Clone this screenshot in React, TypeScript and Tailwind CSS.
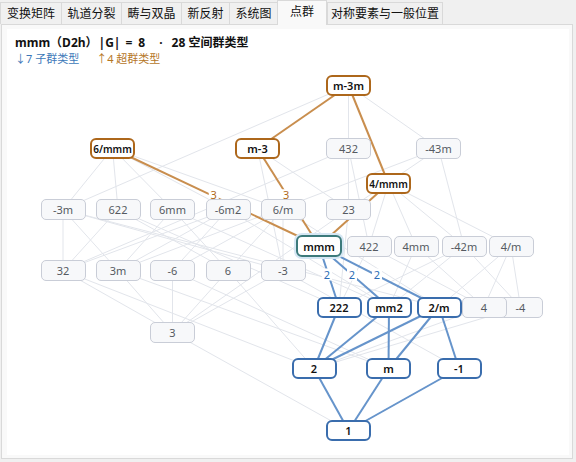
import React from "react";

type Kind = "base" | "sup" | "sub" | "sel";
type Node = { id: string; x: number; y: number; k: Kind; small?: boolean };

// origin of the white drawing area, in page coordinates
const OX = 7;
const OY = 29;
const W = 45;
const H = 21;

const nodes: Node[] = [
  { id: "m-3m", x: 326, y: 75, k: "sup" },
  { id: "6/mmm", x: 90, y: 138, k: "sup", small: true },
  { id: "m-3", x: 235, y: 138, k: "sup" },
  { id: "432", x: 326, y: 138, k: "base" },
  { id: "-43m", x: 416, y: 138, k: "base" },
  { id: "4/mmm", x: 366, y: 173, k: "sup", small: true },
  { id: "-3m", x: 40.5, y: 199, k: "base" },
  { id: "622", x: 95.5, y: 199, k: "base" },
  { id: "6mm", x: 150, y: 199, k: "base" },
  { id: "-6m2", x: 205.5, y: 199, k: "base" },
  { id: "6/m", x: 260.5, y: 199, k: "base" },
  { id: "23", x: 326, y: 199, k: "base" },
  { id: "422", x: 346.5, y: 235.5, k: "base" },
  { id: "4mm", x: 393.5, y: 235.5, k: "base" },
  { id: "-42m", x: 441.5, y: 235.5, k: "base" },
  { id: "4/m", x: 488.5, y: 235.5, k: "base" },
  { id: "32", x: 40.5, y: 260, k: "base" },
  { id: "3m", x: 95.5, y: 260, k: "base" },
  { id: "-6", x: 150, y: 260, k: "base" },
  { id: "6", x: 205.5, y: 260, k: "base" },
  { id: "-3", x: 260.5, y: 260, k: "base" },
  { id: "-4", x: 498, y: 296.5, k: "base" },
  { id: "4", x: 461.5, y: 296.5, k: "base" },
  { id: "222", x: 316.5, y: 296.5, k: "sub" },
  { id: "mm2", x: 366.5, y: 296.5, k: "sub" },
  { id: "2/m", x: 416.5, y: 296.5, k: "sub" },
  { id: "3", x: 150, y: 322, k: "base" },
  { id: "2", x: 291.5, y: 358, k: "sub" },
  { id: "m", x: 366, y: 358, k: "sub" },
  { id: "-1", x: 436.5, y: 358, k: "sub" },
  { id: "1", x: 326, y: 420, k: "sub" },
  { id: "mmm", x: 296, y: 235, k: "sel" },
];

const byId: Record<string, Node> = Object.fromEntries(nodes.map((n) => [n.id, n]));

function center(id: string) {
  const n = byId[id];
  const w = n.k === "sel" ? 46 : W;
  const h = n.k === "sel" ? 22 : H;
  return { cx: n.x + w / 2 - OX, cy: n.y + h / 2 - OY };
}

// maximal-subgroup relations between the 32 crystallographic point groups
const lattice: [string, string][] = [
  ["m-3m", "m-3"], ["m-3m", "432"], ["m-3m", "-43m"], ["m-3m", "4/mmm"], ["m-3m", "-3m"],
  ["m-3", "23"], ["m-3", "mmm"], ["m-3", "-3"],
  ["432", "23"], ["432", "422"], ["432", "32"],
  ["-43m", "23"], ["-43m", "-42m"], ["-43m", "3m"],
  ["23", "222"], ["23", "3"],
  ["6/mmm", "6/m"], ["6/mmm", "622"], ["6/mmm", "6mm"], ["6/mmm", "-6m2"], ["6/mmm", "-3m"], ["6/mmm", "mmm"],
  ["6/m", "6"], ["6/m", "-6"], ["6/m", "-3"], ["6/m", "2/m"],
  ["622", "6"], ["622", "32"], ["622", "222"],
  ["6mm", "6"], ["6mm", "3m"], ["6mm", "mm2"],
  ["-6m2", "-6"], ["-6m2", "32"], ["-6m2", "3m"], ["-6m2", "mm2"],
  ["6", "3"], ["6", "2"], ["-6", "3"], ["-6", "m"],
  ["-3m", "32"], ["-3m", "3m"], ["-3m", "-3"], ["-3m", "2/m"],
  ["32", "3"], ["32", "2"], ["3m", "3"], ["3m", "m"], ["-3", "3"], ["-3", "-1"], ["3", "1"],
  ["4/mmm", "4/m"], ["4/mmm", "422"], ["4/mmm", "4mm"], ["4/mmm", "-42m"], ["4/mmm", "mmm"],
  ["4/m", "4"], ["4/m", "-4"], ["4/m", "2/m"],
  ["422", "4"], ["422", "222"], ["4mm", "4"], ["4mm", "mm2"],
  ["-42m", "-4"], ["-42m", "222"], ["-42m", "mm2"],
  ["4", "2"], ["-4", "2"],
  ["mmm", "222"], ["mmm", "mm2"], ["mmm", "2/m"],
  ["222", "2"], ["mm2", "2"], ["mm2", "m"], ["2/m", "2"], ["2/m", "m"], ["2/m", "-1"],
  ["2", "1"], ["m", "1"], ["-1", "1"],
];

const supEdges: [string, string][] = [
  ["m-3m", "m-3"], ["m-3m", "4/mmm"], ["6/mmm", "mmm"], ["m-3", "mmm"], ["4/mmm", "mmm"],
];
const subEdges: [string, string][] = [
  ["mmm", "222"], ["mmm", "mm2"], ["mmm", "2/m"],
  ["222", "2"], ["mm2", "2"], ["mm2", "m"], ["2/m", "2"], ["2/m", "m"], ["2/m", "-1"],
  ["2", "1"], ["m", "1"], ["-1", "1"],
];
// group-subgroup index shown on the edges that touch the current group
const indexLabels: { a: string; b: string; t: string; c: string }[] = [
  { a: "6/mmm", b: "mmm", t: "3", c: "#b0691c" },
  { a: "m-3", b: "mmm", t: "3", c: "#b0691c" },
  { a: "mmm", b: "222", t: "2", c: "#2b6cb5" },
  { a: "mmm", b: "mm2", t: "2", c: "#2b6cb5" },
  { a: "mmm", b: "2/m", t: "2", c: "#2b6cb5" },
];

const kindClass: Record<Kind, string> = {
  base: "border border-[#c9cdd7] bg-[#f7f8fa] text-[#555a61] rounded-[5px]",
  sup: "border-2 border-[#ad671b] bg-white text-[#111] font-semibold rounded-[6px]",
  sub: "border-2 border-[#3a6dad] bg-white text-[#111] font-semibold rounded-[6px]",
  sel: "border-[2.5px] border-[#3c7a7b] bg-white text-[#111] font-semibold rounded-[6px] shadow-[0_0_0_2px_#d6e7f4]",
};

const tabs: { label: string; w: string; active?: boolean }[] = [
  { label: "变换矩阵", w: "w-[61px]" },
  { label: "轨道分裂", w: "w-[60px]" },
  { label: "畴与双晶", w: "w-[60px]" },
  { label: "新反射", w: "w-[48px]" },
  { label: "系统图", w: "w-[48px]" },
  { label: "点群", w: "w-[50px]", active: true },
  { label: "对称要素与一般位置", w: "w-[116px]" },
];

const FONT = '"Noto Sans", "Noto Sans CJK SC", sans-serif';

function Line({ a, b, color, width }: { a: string; b: string; color: string; width: number }) {
  const p = center(a);
  const q = center(b);
  return <line x1={p.cx} y1={p.cy} x2={q.cx} y2={q.cy} stroke={color} strokeWidth={width} />;
}

export default function App() {
  return (
    <div className="w-[576px] h-[462px] bg-[#f0f0f0] overflow-hidden" style={{ fontFamily: FONT }}>
      <div className="flex items-start h-[24px]">
        {tabs.map((t) =>
          t.active ? (
            <div
              key={t.label}
              className={`${t.w} relative z-10 h-[25px] bg-[#f9f9f9] border-t border-l border-r border-[#d9d9d9] flex items-center justify-center text-[12px] text-[#111] pb-[2px]`}
            >
              {t.label}
            </div>
          ) : (
            <div
              key={t.label}
              className={`${t.w} mt-[2px] h-[22px] bg-[#f0f0f0] border-t border-l border-[#d9d9d9] last:border-r flex items-center justify-center text-[12px] text-[#111]`}
            >
              {t.label}
            </div>
          )
        )}
      </div>
      <div className="ml-[1px] w-[572px] h-[435px] border border-[#d9d9d9] bg-[#f9f9f9] pl-[5px] pt-[4px] pr-[3px] pb-[3px]">
        <div className="relative w-[562px] h-[426px] bg-white">
          <div className="absolute left-[8px] top-[6px] flex flex-col">
            <div className="flex items-center h-[16px] text-[12px] font-bold text-[#111] whitespace-nowrap">
              <span>mmm（D2h）</span>
              <span className="ml-[1px]">|G|</span>
              <span className="ml-[5px]">=</span>
              <span className="ml-[6px]">8</span>
              <span className="ml-[14px]">·</span>
              <span className="ml-[9px]">28 空间群类型</span>
            </div>
            <div className="flex items-center h-[16px] text-[11px] whitespace-nowrap">
              <span className="text-[#3c78b8]">↓7 子群类型</span>
              <span className="ml-[17px] text-[#b5761f]">↑4 超群类型</span>
            </div>
          </div>

          <svg className="absolute left-0 top-0" width={562} height={426}>
            {lattice.map(([a, b]) => (
              <Line key={`g-${a}-${b}`} a={a} b={b} color="#e2e5eb" width={1} />
            ))}
            {supEdges.map(([a, b]) => (
              <Line key={`o-${a}-${b}`} a={a} b={b} color="#c98e4e" width={2} />
            ))}
            {subEdges.map(([a, b]) => (
              <Line key={`b-${a}-${b}`} a={a} b={b} color="#6694cb" width={2} />
            ))}
            {indexLabels.map((l) => {
              const p = center(l.a);
              const q = center(l.b);
              const mx = (p.cx + q.cx) / 2 - 2;
              const my = (p.cy + q.cy) / 2 - 2;
              return (
                <g key={`l-${l.a}-${l.b}`}>
                  <rect x={mx - 5} y={my - 6} width={10} height={12} fill="white" />
                  <text
                    x={mx}
                    y={my + 4}
                    textAnchor="middle"
                    fontSize={11}
                    fill={l.c}
                    style={{ fontFamily: FONT }}
                  >
                    {l.t}
                  </text>
                </g>
              );
            })}
          </svg>

          {nodes.map((n) => (
            <div
              key={n.id}
              className={`absolute box-border flex items-center justify-center leading-none ${
                n.k === "sel" ? "w-[46px] h-[22px]" : "w-[45px] h-[21px]"
              } ${n.small ? "text-[10px]" : "text-[11px]"} ${kindClass[n.k]}`}
              style={{ left: n.x - OX, top: n.y - OY }}
            >
              {n.id}
            </div>
          ))}
        </div>
      </div>
    </div>
  );
}
